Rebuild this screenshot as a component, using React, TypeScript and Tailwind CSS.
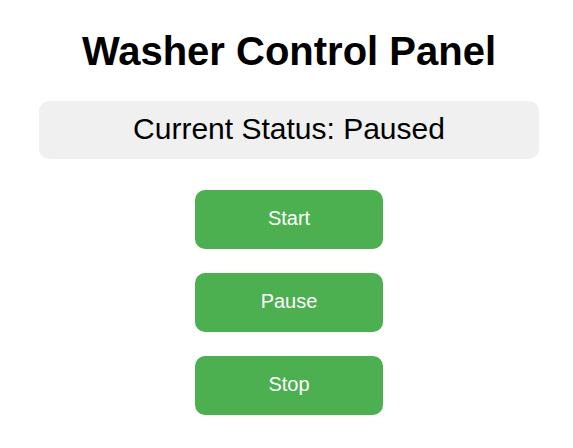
import { useState } from "react"

type Status = "Running" | "Paused" | "Stopped"

const actions: { label: string; next: Status }[] = [
  { label: "Start", next: "Running" },
  { label: "Pause", next: "Paused" },
  { label: "Stop", next: "Stopped" },
]

export default function App() {
  const [status, setStatus] = useState<Status>("Paused")

  return (
    <div className="min-h-[448px] w-[573px] bg-white pl-[5px] font-['Liberation_Sans',Arial,sans-serif] text-black">
      <div className="flex flex-col items-center pt-[28px]">
        <h1 className="text-[40px] font-bold leading-[46px]">Washer Control Panel</h1>

        {/* current state readout */}
        <div className="mt-[27px] flex h-[58px] w-[500px] items-center justify-center rounded-[10px] bg-[#f0f0f0] pb-[2px]">
          <span className="text-[30px] leading-none">Current Status: {status}</span>
        </div>

        <div className="mt-[31px] flex flex-col gap-[24px]">
          {actions.map((a) => (
            <button
              key={a.label}
              onClick={() => setStatus(a.next)}
              className="h-[59px] w-[188px] rounded-[10px] bg-[#4caf50] pb-[3px] text-[20px] text-white"
            >
              {a.label}
            </button>
          ))}
        </div>
      </div>
    </div>
  )
}
